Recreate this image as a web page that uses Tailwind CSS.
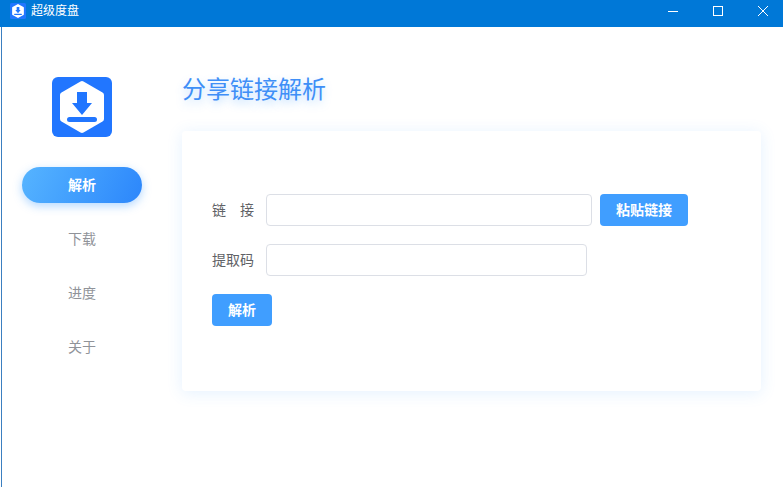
<!DOCTYPE html>
<html lang="zh-CN">
<head>
    <meta charset="UTF-8">
    <title>超级度盘</title>
    <script src="https://cdn.jsdelivr.net/npm/@tailwindcss/browser@4"></script>
</head>
<body class="w-[783px] h-[487px] overflow-hidden bg-white font-['Liberation_Sans','Noto_Sans_CJK_SC',sans-serif]">
    <!-- title bar -->
    <div class="h-[27px] pb-[5px] bg-[#0078d7] flex items-center text-white">
        <svg class="ml-[10px] w-4 h-4" viewBox="0 0 60 60">
            <rect width="60" height="60" rx="6" fill="#2176ff"/>
            <path d="M30 7 L49 18 V42 L30 53 L11 42 V18 Z" fill="#fff" stroke="#fff" stroke-width="6" stroke-linejoin="round"/>
            <path d="M25 15 H35 V26 H40 L30 38 L20 26 H25 Z" fill="#2176ff"/>
            <rect x="15" y="40" width="30" height="5" rx="2.5" fill="#2176ff"/>
        </svg>
        <span class="ml-[5px] text-xs">超级度盘</span>
        <div class="ml-auto flex items-center gap-[35px] pr-[15px]">
            <svg class="w-[10px] h-[10px]" viewBox="0 0 10 10"><path d="M0 5.5H10" stroke="#fff" fill="none"/></svg>
            <svg class="w-[10px] h-[10px]" viewBox="0 0 10 10"><rect x="0.5" y="0.5" width="9" height="9" stroke="#fff" fill="none"/></svg>
            <svg class="w-[10px] h-[10px]" viewBox="0 0 10 10"><path d="M0 0L10 10M10 0L0 10" stroke="#fff" fill="none"/></svg>
        </div>
    </div>

    <div class="h-[460px] ml-px flex border-l border-[#3b7fc0]">
        <!-- sidebar -->
        <div class="w-[160px] shrink-0 flex flex-col pt-[50px] pl-[20px]">
            <svg class="ml-[30px] w-[60px] h-[60px]" viewBox="0 0 60 60">
                <rect width="60" height="60" rx="6" fill="#2176ff"/>
                <path d="M30 7 L49 18 V42 L30 53 L11 42 V18 Z" fill="#fff" stroke="#fff" stroke-width="6" stroke-linejoin="round"/>
                <path d="M25 15 H35 V26 H40 L30 38 L20 26 H25 Z" fill="#2176ff"/>
                <rect x="15" y="40" width="30" height="5" rx="2.5" fill="#2176ff"/>
            </svg>
            <div class="mt-[30px] flex flex-col w-[120px] text-sm text-center">
                <div class="h-9 leading-9 rounded-full text-white font-semibold bg-linear-115 from-[#56b4ff] to-[#2c86fb] shadow-[0_3px_10px_rgba(64,158,255,0.4)]">解析</div>
                <div class="h-9 leading-9 mt-[18px] text-[#909399]">下载</div>
                <div class="h-9 leading-9 mt-[18px] text-[#909399]">进度</div>
                <div class="h-9 leading-9 mt-[18px] text-[#909399]">关于</div>
            </div>
        </div>

        <!-- main -->
        <div class="flex-1 pl-[20px]">
            <h1 class="mt-[47px] h-[32px] leading-[32px] text-2xl font-normal text-[#3f8ff7] [text-shadow:0_4px_8px_rgba(64,158,255,0.35)]">分享链接解析</h1>
            <div class="mt-[25px] w-[579px] h-[260px] bg-white rounded-[4px] shadow-[0_2px_16px_rgba(64,158,255,0.14)] pt-[63px] pl-[30px] text-sm text-[#606266]">
                <div class="flex items-center h-8">
                    <label class="w-[42px] flex justify-between"><span>链</span><span>接</span></label>
                    <input type="text" class="ml-3 w-[326px] h-8 border border-[#dcdfe6] rounded-[4px] bg-white outline-none">
                    <button class="ml-2 w-[88px] h-8 rounded-[4px] bg-[#409eff] text-white font-semibold">粘贴链接</button>
                </div>
                <div class="flex items-center h-8 mt-[18px]">
                    <label class="w-[42px] whitespace-nowrap">提取码</label>
                    <input type="text" class="ml-3 w-[321px] h-8 border border-[#dcdfe6] rounded-[4px] bg-white outline-none">
                </div>
                <button class="block mt-[18px] w-[60px] h-8 rounded-[4px] bg-[#409eff] text-white font-semibold">解析</button>
            </div>
        </div>
    </div>
</body>
</html>
